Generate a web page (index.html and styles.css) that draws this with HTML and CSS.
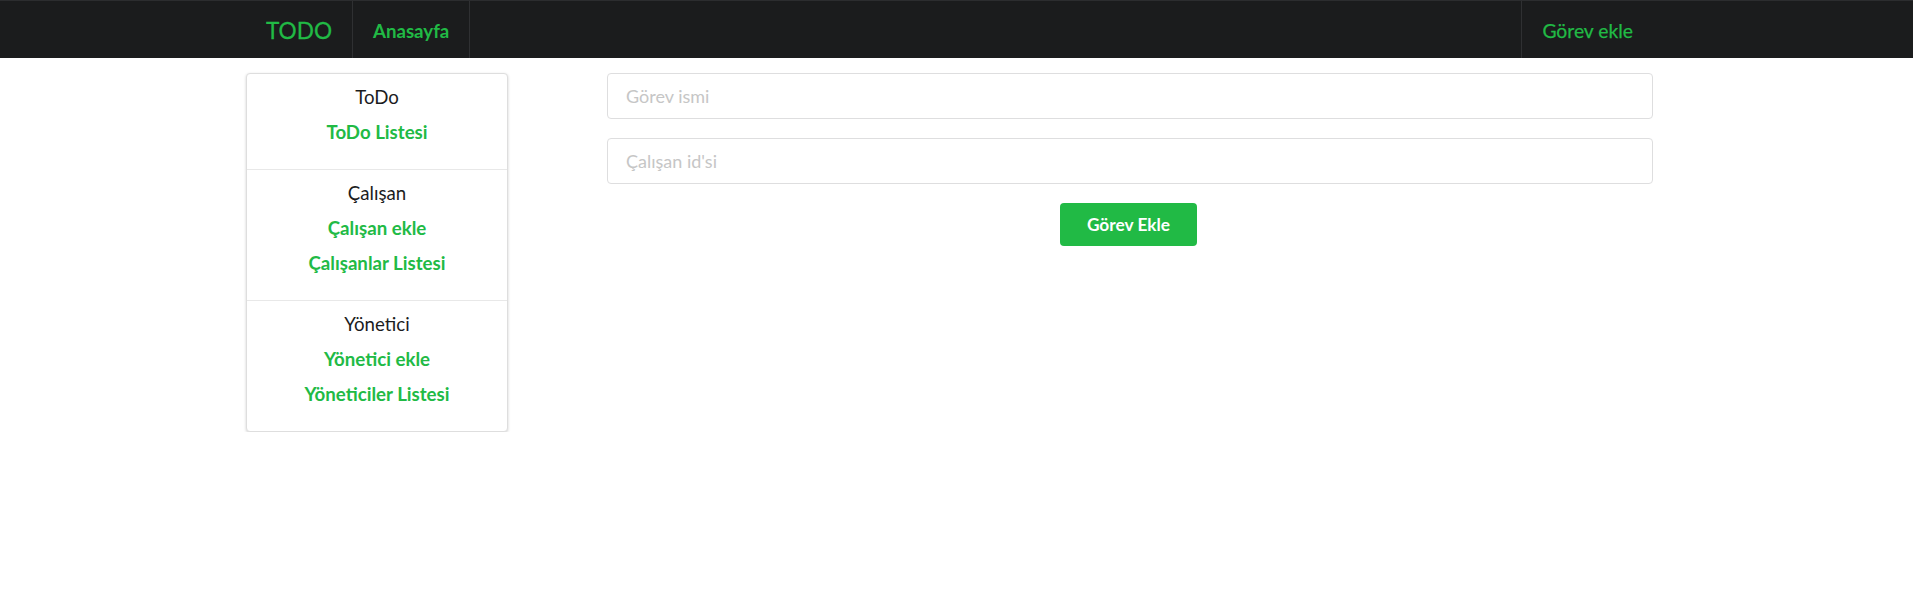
FILE: index.html
```html
<!DOCTYPE html>
<html lang="tr">
<head>
<meta charset="utf-8">
<title>TODO</title>
<link rel="stylesheet" href="styles.css">
</head>
<body>
<nav class="navbar">
  <div class="nav-inner">
    <a class="brand" href="#">TODO</a>
    <a class="nav-item bold" href="#">Anasayfa</a>
    <div class="nav-spacer"></div>
    <a class="nav-item right" href="#">Görev ekle</a>
  </div>
</nav>
<main class="container">
  <aside class="card">
    <div class="card-section">
      <div class="card-title">ToDo</div>
      <a class="card-link" href="#">ToDo Listesi</a>
    </div>
    <div class="card-section">
      <div class="card-title">Çalışan</div>
      <a class="card-link" href="#">Çalışan ekle</a>
      <a class="card-link" href="#">Çalışanlar Listesi</a>
    </div>
    <div class="card-section">
      <div class="card-title">Yönetici</div>
      <a class="card-link" href="#">Yönetici ekle</a>
      <a class="card-link" href="#">Yöneticiler Listesi</a>
    </div>
  </aside>
  <form class="form">
    <input class="input" type="text" placeholder="Görev ismi">
    <input class="input" type="text" placeholder="Çalışan id'si">
    <div class="form-actions">
      <button class="button" type="button">Görev Ekle</button>
    </div>
  </form>
</main>
</body>
</html>
```
FILE: styles.css
```css
* { box-sizing: border-box; }
html, body { margin: 0; padding: 0; }
body {
  font-family: Lato, "Open Sans", "Liberation Sans", sans-serif;
  background: #ffffff;
  color: #1b1c1d;
}
a { text-decoration: none; }

.navbar {
  background: #1b1c1d;
  border-top: 1px solid #2c2d2f;
  height: 58px;
}
.nav-inner {
  display: flex;
  height: 100%;
  width: 1407px;
  margin-left: 246px;
}
.brand,
.nav-item {
  display: flex;
  align-items: center;
  padding: 2px 20px 0;
  color: #21ba45;
  white-space: nowrap;
  border-right: 1px solid #2f3032;
}
.brand {
  font-size: 22.6px;
  font-weight: 400;
  -webkit-text-stroke: 0.3px #21ba45;
}
.nav-item {
  font-size: 18.67px;
}
.nav-item.bold { font-weight: 700; }
.nav-spacer { flex: 1; }
.nav-item.right {
  font-size: 19.3px;
  -webkit-text-stroke: 0.25px #21ba45;
  border-left: 1px solid #2f3032;
  border-right: none;
}

.container {
  display: flex;
  align-items: flex-start;
  gap: 99px;
  width: 1407px;
  margin: 15px 0 0 246px;
}

.card {
  width: 262px;
  flex: none;
  border: 1px solid #dedede;
  border-radius: 4px;
  box-shadow: 0 1px 3px rgba(0, 0, 0, 0.18);
  background: #fff;
}
.card-section {
  display: flex;
  flex-direction: column;
  align-items: center;
  padding: 6px 0 19px;
}
.card-section + .card-section {
  border-top: 1px solid #e8e8e8;
}
.card-title,
.card-link {
  font-size: 18.67px;
  line-height: 35px;
  height: 35px;
}
.card-title { color: #1b1c1d; }
.card-link {
  color: #21ba45;
  font-weight: 700;
}

.form {
  flex: 1;
  display: flex;
  flex-direction: column;
  gap: 19px;
}
.input {
  display: block;
  width: 100%;
  height: 46px;
  padding: 0 18px;
  border: 1px solid #dededf;
  border-radius: 4px;
  font-family: Lato, "Open Sans", "Liberation Sans", sans-serif;
  font-size: 18px;
  color: #1b1c1d;
  outline: none;
}
.input::placeholder { color: #c6c6c6; }
.form-actions {
  display: flex;
  justify-content: center;
}
.button {
  height: 43px;
  width: 137px;
  margin-right: 3px;
  border: none;
  border-radius: 4px;
  background: #21ba45;
  color: #fff;
  font-family: Lato, "Open Sans", "Liberation Sans", sans-serif;
  font-size: 17.3px;
  font-weight: 700;
  cursor: pointer;
}
```
